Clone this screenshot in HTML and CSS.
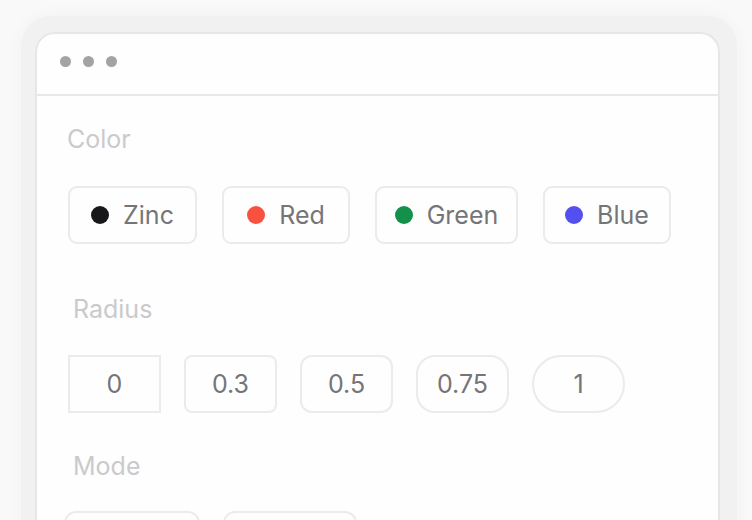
FILE: index.html
```html
<!DOCTYPE html>
<html lang="en">
<head>
    <meta charset="UTF-8">
    <meta name="viewport" content="width=device-width, initial-scale=1.0">
    <title>Theme Customizer</title>
    <link rel="stylesheet" href="styles.css">
</head>
<body>
    <div class="shell">
        <div class="window">
            <div class="titlebar">
                <span class="dot"></span>
                <span class="dot"></span>
                <span class="dot"></span>
            </div>
            <div class="content">
                <div class="label label-color">Color</div>
                <div class="row color-row">
                    <button class="option color-option zinc"><span class="swatch"></span>Zinc</button>
                    <button class="option color-option red"><span class="swatch"></span>Red</button>
                    <button class="option color-option green"><span class="swatch"></span>Green</button>
                    <button class="option color-option blue"><span class="swatch"></span>Blue</button>
                </div>

                <div class="label label-radius">Radius</div>
                <div class="row radius-row">
                    <button class="option radius-option r-0">0</button>
                    <button class="option radius-option r-03">0.3</button>
                    <button class="option radius-option r-05">0.5</button>
                    <button class="option radius-option r-075">0.75</button>
                    <button class="option radius-option r-1">1</button>
                </div>

                <div class="label label-mode">Mode</div>
                <!-- mode buttons are cut off by the bottom edge -->
                <div class="row mode-row">
                    <button class="option mode-option light" aria-label="Light"></button>
                    <button class="option mode-option dark" aria-label="Dark"></button>
                </div>
            </div>
        </div>
    </div>
</body>
</html>
```

FILE: styles.css
```css
* {
    box-sizing: border-box;
}
body {
    margin: 0;
    height: 520px;
    overflow: hidden;
    background-color: #f9f9fa;
    font-family: Inter, 'Liberation Sans', sans-serif;
}
.shell {
    margin: 16px 15px 0 21px;
    padding: 16px 17px 0 14px;
    height: 600px;
    background-color: #f1f1f2;
    border-radius: 30px 30px 0 0;
    box-shadow: 0 0 18px rgba(0,0,0,0.035);
}
.window {
    height: 600px;
    background-color: #fefefe;
    border: 2px solid #e7e6e9;
    border-bottom: none;
    border-radius: 20px 20px 0 0;
}
.titlebar {
    height: 62px;
    display: flex;
    gap: 12px;
    padding: 22px 23px 0;
    border-bottom: 2px solid #e8e8ea;
}
.dot {
    width: 11px;
    height: 11px;
    border-radius: 50%;
    background-color: #a3a3a5;
}
.content {
    padding: 28px 0 0 30px;
}
.label {
    font-size: 25px;
    line-height: 30px;
    color: #cacacd;
}
.label-radius {
    margin: 50px 0 0 6px;
}
.label-mode {
    margin: 38px 0 0 6px;
}
.row {
    display: flex;
    margin-left: 1px;
}
.color-row {
    margin-top: 32px;
    gap: 25px;
}
.radius-row {
    margin-top: 31px;
    gap: 23px;
}
.mode-row {
    margin-top: 30px;
    margin-left: -3px;
    gap: 23px;
}
.option {
    height: 58px;
    display: flex;
    align-items: center;
    justify-content: center;
    background-color: #fefefe;
    border: 2px solid #ebeaed;
    border-radius: 9px;
    font-family: inherit;
    font-size: 25px;
    color: #757577;
    padding: 0;
}
.color-option {
    width: 128px;
    gap: 14px;
}
.color-option.zinc { width: 129px; }
.color-option.green { width: 143px; }
.swatch {
    width: 18px;
    height: 18px;
    border-radius: 50%;
}
.zinc .swatch { background-color: #18181b; }
.red .swatch { background-color: #f9513f; }
.green .swatch { background-color: #13914a; }
.blue .swatch { background-color: #5450ef; }
.radius-option {
    width: 93px;
}
.r-0 { border-radius: 0; }
.r-03 { border-radius: 8px; }
.r-05 { border-radius: 12px; }
.r-075 { border-radius: 19px; }
.r-1 { border-radius: 29px; }
.mode-option {
    border-radius: 12px;
}
.mode-option.light { width: 136px; }
.mode-option.dark { width: 134px; }
```
